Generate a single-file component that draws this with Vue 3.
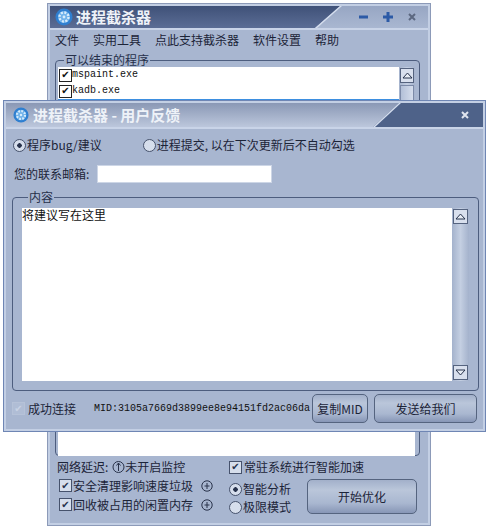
<template>
  <div class="desktop">
    <!-- 主窗口 -->
    <div class="window main-window">
      <div class="titlebar main-title">
        <svg class="logo" width="18" height="18" viewBox="0 0 18 18">
          <circle cx="9" cy="9" r="8.5" fill="#2f7fd0" />
          <circle cx="9" cy="9" r="6" fill="#6fb2ea" />
          <circle cx="9" cy="9" r="4.5" fill="none" stroke="#d8ecfb" stroke-width="2.4" stroke-dasharray="2 1.5" />
          <circle cx="9" cy="9" r="1.4" fill="#d8ecfb" />
        </svg>
        <span class="title-text">进程截杀器</span>
        <div class="controls">
          <svg width="12" height="12" viewBox="0 0 12 12"><rect x="1" y="4.5" width="9" height="3" fill="#2c5aa6" /></svg>
          <svg width="12" height="12" viewBox="0 0 12 12"><path d="M1 4.5h3.5V1h3v3.5H11v3H7.5V11h-3V7.5H1z" fill="#2c5aa6" /></svg>
          <svg width="12" height="12" viewBox="0 0 12 12"><path d="M3 3l6 6M9 3l-6 6" stroke="#5c6880" stroke-width="2" /></svg>
        </div>
      </div>
      <div class="menu">
        <span v-for="m in menus" :key="m">{{ m }}</span>
      </div>
      <fieldset class="group main-group">
        <legend>可以结束的程序</legend>
        <div class="list-box">
          <div class="list-rows">
            <div v-for="p in processes" :key="p" class="list-row">
              <span class="check check-white">✔</span><span class="mono">{{ p }}</span>
            </div>
            <div class="list-row selected"></div>
          </div>
          <div class="scroll-track narrow">
            <div class="scroll-btn">
              <svg width="11" height="7" viewBox="0 0 11 7"><path d="M1 6l4.5-5 4.5 5z" fill="#e8edf5" stroke="#27324c" /></svg>
            </div>
            <div class="scroll-thumb"></div>
          </div>
        </div>
      </fieldset>
      <div class="bottom-panel">
        <div class="bottom-left">
          <div class="net-row">
            <span>网络延迟:</span>
            <svg width="13" height="14" viewBox="0 0 13 14"><circle cx="6.5" cy="7" r="5.5" fill="none" stroke="#28324a" /><path d="M6.5 11V3M4.5 5.5l2-2.5 2 2.5" fill="none" stroke="#28324a" /></svg>
            <span>未开启监控</span>
          </div>
          <div v-for="o in options" :key="o" class="opt-row">
            <span class="check">✔</span><span class="opt-text">{{ o }}</span>
            <svg class="plus" width="12" height="12" viewBox="0 0 12 12"><circle cx="6" cy="6" r="5.2" fill="none" stroke="#28324a" /><path d="M6 3v6M3.5 6h5" stroke="#28324a" /></svg>
          </div>
        </div>
        <div class="bottom-right">
          <div class="resident">
            <span class="check">✔</span><span>常驻系统进行智能加速</span>
          </div>
          <div class="mode-row">
            <div class="modes">
              <div class="mode"><span class="radio on"></span>智能分析</div>
              <div class="mode"><span class="radio"></span>极限模式</div>
            </div>
            <button class="btn start-btn">开始优化</button>
          </div>
        </div>
      </div>
    </div>

    <!-- 用户反馈窗口 -->
    <div class="window dialog">
      <div class="titlebar dialog-title">
        <svg class="logo small" width="16" height="16" viewBox="0 0 18 18">
          <circle cx="9" cy="9" r="8.5" fill="#2f7fd0" />
          <circle cx="9" cy="9" r="6" fill="#6fb2ea" />
          <circle cx="9" cy="9" r="4.5" fill="none" stroke="#d8ecfb" stroke-width="2.4" stroke-dasharray="2 1.5" />
          <circle cx="9" cy="9" r="1.4" fill="#d8ecfb" />
        </svg>
        <span class="title-text">进程截杀器 - 用户反馈</span>
        <svg class="close" width="12" height="12" viewBox="0 0 12 12"><path d="M3 3l6 6M9 3l-6 6" stroke="#dfe4ee" stroke-width="2" /></svg>
      </div>
      <div class="dialog-body">
        <div class="radio-row">
          <div class="mode"><span class="radio on"></span>程序bug/建议</div>
          <div class="mode"><span class="radio"></span>进程提交, 以在下次更新后不自动勾选</div>
        </div>
        <div class="mail-row">
          <span>您的联系邮箱:</span>
          <div class="mail-input"></div>
        </div>
        <fieldset class="group content-group">
          <legend>内容</legend>
          <div class="text-box">
            <div class="text-area">将建议写在这里</div>
            <div class="scroll-track">
              <div class="scroll-btn">
                <svg width="11" height="7" viewBox="0 0 11 7"><path d="M1 6l4.5-5 4.5 5z" fill="#e8edf5" stroke="#27324c" /></svg>
              </div>
              <div class="scroll-btn">
                <svg width="11" height="7" viewBox="0 0 11 7"><path d="M1 1l4.5 5 4.5-5z" fill="#e8edf5" stroke="#27324c" /></svg>
              </div>
            </div>
          </div>
        </fieldset>
        <div class="action-row">
          <span class="check disabled">✔</span>
          <span class="conn">成功连接</span>
          <span class="mono mid">MID:3105a7669d3899ee8e94151fd2ac06da</span>
          <button class="btn copy-btn">复制MID</button>
          <button class="btn send-btn">发送给我们</button>
        </div>
      </div>
    </div>
  </div>
</template>

<script setup>
const menus = ['文件', '实用工具', '点此支持截杀器', '软件设置', '帮助']
const processes = ['mspaint.exe', 'kadb.exe']
const options = ['安全清理影响速度垃圾', '回收被占用的闲置内存']
</script>

<style>
body {
  background: #fff;
}
</style>

<style scoped>
.desktop {
  position: relative;
  width: 489px;
  height: 527px;
  overflow: hidden;
  font-family: "Noto Sans CJK SC", "Liberation Sans", sans-serif;
  font-size: 12px;
  line-height: 16px;
  color: #1c2438;
}

/* 窗口 */
.window {
  position: absolute;
  box-sizing: border-box;
  display: flex;
  flex-direction: column;
  background: #a8b6d0;
  border: 1px solid #8c9ab8;
  outline: 2px solid #c3cfe4;
  outline-offset: -3px;
}
.main-window {
  left: 47px;
  top: 3px;
  width: 384px;
  height: 523px;
}
.dialog {
  left: 3px;
  top: 100px;
  width: 483px;
  height: 332px;
  border-color: #6f86b4;
}

/* 标题栏 */
.titlebar {
  position: relative;
  display: flex;
  align-items: center;
  flex: none;
  margin: 2px 2px 0;
  border-bottom: 2px solid #c9d4e8;
}
.titlebar::after {
  content: "";
  position: absolute;
  inset: 0;
  background: #d5deee;
}
.main-title {
  height: 22px;
  padding-left: 5px;
  background: linear-gradient(#97a6c3, #a9b7d1);
}
.main-title::before {
  content: "";
  position: absolute;
  inset: 0;
  background: linear-gradient(#3f5178, #5b6d95);
  clip-path: polygon(0 0, 290px 0, 265px 100%, 0 100%);
}
.main-title::after {
  clip-path: polygon(290px 0, 292px 0, 267px 100%, 265px 100%);
}
.dialog-title {
  height: 24px;
  padding-left: 7px;
  background: #4e6289;
}
.dialog-title::before {
  content: "";
  position: absolute;
  inset: 0;
  background: linear-gradient(#8a98b5, #bcc7dc);
  clip-path: polygon(0 0, 393px 0, 367px 100%, 0 100%);
}
.dialog-title::after {
  clip-path: polygon(393px 0, 395px 0, 369px 100%, 367px 100%);
}
.logo,
.title-text,
.controls,
.close {
  position: relative;
}
.logo {
  margin-right: 3px;
}
.logo.small {
  margin-right: 4px;
}
.title-text {
  font-size: 15px;
  font-weight: 700;
  color: #eef2f8;
}
.controls {
  display: flex;
  gap: 12px;
  margin-left: auto;
  margin-right: 10px;
}
.close {
  margin-left: auto;
  margin-right: 12px;
}

/* 菜单 */
.menu {
  display: flex;
  gap: 14px;
  flex: none;
  padding: 0 7px;
  height: 23px;
  box-sizing: border-box;
  line-height: 18px;
  margin-top: 1px;
}

/* 分组框 */
.group {
  margin: 0;
  padding: 0 0 0 2px;
  border: 1px solid #4d5d7e;
  border-radius: 4px;
  min-width: 0;
}
.group legend {
  padding: 0 1px;
  margin-left: 6px;
  line-height: 14px;
  color: #26304a;
}
.main-group {
  margin: -1px 10px 0 7px;
  height: 403px;
  box-sizing: border-box;
}
.list-box {
  display: flex;
  background: #fff;
  height: 389px;
  margin-right: 4px;
}
.list-rows {
  flex: 1;
}
.list-row {
  display: flex;
  align-items: center;
  height: 16px;
  padding-left: 1px;
}
.list-row.selected {
  background: #3d8fe0;
}
.mono {
  font-family: "Liberation Mono", monospace;
  font-size: 10px;
  color: #111;
}

/* 滚动条 */
.scroll-track {
  display: flex;
  flex-direction: column;
  justify-content: space-between;
  box-sizing: border-box;
  width: 17px;
  padding: 1px;
  background: linear-gradient(90deg, #a4b2cc, #c4cfe2 50%, #a4b2cc);
}
.scroll-track.narrow {
  justify-content: flex-start;
  align-self: flex-start;
  gap: 2px;
  width: 16px;
  height: 300px;
}
.scroll-btn {
  display: flex;
  align-items: center;
  justify-content: center;
  height: 15px;
  box-sizing: border-box;
  border: 1px solid #55637f;
  background: #d9e0ee;
}
.scroll-thumb {
  height: 60px;
  border: 1px solid #7c8aa8;
  background: linear-gradient(90deg, #b3c0d8, #d5ddec);
}

/* 复选框 / 单选框 */
.check {
  display: inline-flex;
  align-items: center;
  justify-content: center;
  flex: none;
  box-sizing: border-box;
  width: 13px;
  height: 13px;
  border: 1px solid #46526c;
  background: #d6deec;
  font-family: "DejaVu Sans", sans-serif;
  font-size: 10px;
  line-height: 1;
  color: #27324c;
}
.check-white {
  border-color: #222;
  background: #fff;
  color: #111;
}
.check.disabled {
  border-color: #b6c2d8;
  background: #b0bdd5;
  color: #c8d2e4;
}
.radio {
  flex: none;
  box-sizing: border-box;
  width: 13px;
  height: 13px;
  margin-right: 1px;
  border: 1px solid #46526c;
  border-radius: 50%;
  background: #d6deec;
}
.radio.on {
  background: radial-gradient(circle, #27324c 0 2px, #d6deec 2.5px);
}
.mode {
  display: flex;
  align-items: center;
}

/* 主窗口底部 */
.bottom-panel {
  display: flex;
  padding: 2px 0 0 9px;
}
.bottom-left {
  width: 172px;
}
.net-row {
  display: flex;
  align-items: center;
  height: 18px;
}
.net-row svg {
  margin-left: 4px;
}
.opt-row {
  display: flex;
  align-items: center;
  height: 19px;
  padding-left: 2px;
}
.opt-text {
  margin-left: 1px;
}
.plus {
  margin-left: 8px;
}
.bottom-right {
  flex: 1;
}
.resident {
  display: flex;
  align-items: center;
  gap: 2px;
  height: 18px;
}
.mode-row {
  display: flex;
  align-items: flex-start;
}
.modes {
  padding-top: 4px;
  width: 78px;
}
.modes .mode {
  height: 18px;
}

/* 按钮 */
.btn {
  padding: 0;
  font: inherit;
  color: #1c2438;
  border: 1px solid #55647f;
  border-radius: 5px;
  background: linear-gradient(#a2b0ca, #bac6da 30%, #a9b7d0 70%, #8796b6);
}
.start-btn {
  width: 110px;
  height: 35px;
  margin-top: 3px;
}

/* 反馈窗口内容 */
.dialog-body {
  flex: 1;
  display: flex;
  flex-direction: column;
  padding: 0 6px 0 8px;
}
.radio-row {
  display: flex;
  gap: 41px;
  height: 20px;
  margin-top: 6px;
  padding-left: 1px;
}
.mail-row {
  display: flex;
  align-items: center;
  gap: 2px;
  height: 18px;
  margin-top: 10px;
  padding-left: 2px;
}
.mail-input {
  width: 175px;
  height: 18px;
  margin-left: 6px;
  background: #fff;
  border: 1px solid #cdd6e6;
  box-sizing: border-box;
}
.content-group {
  height: 201px;
  margin-top: 7px;
  padding: 0 9px 0 9px;
  box-sizing: border-box;
}
.text-box {
  display: flex;
  height: 173px;
  margin-top: 4px;
  background: #fff;
}
.text-area {
  flex: 1;
  line-height: 14px;
  color: #111;
}
.action-row {
  display: flex;
  align-items: center;
  height: 29px;
  margin-top: 3px;
}
.conn {
  margin-left: 3px;
}
.mid {
  margin-left: 18px;
  white-space: nowrap;
}
.copy-btn {
  flex: none;
  width: 56px;
  height: 29px;
  margin-left: 2px;
}
.send-btn {
  flex: none;
  width: 103px;
  height: 29px;
  margin-left: 6px;
}
</style>
